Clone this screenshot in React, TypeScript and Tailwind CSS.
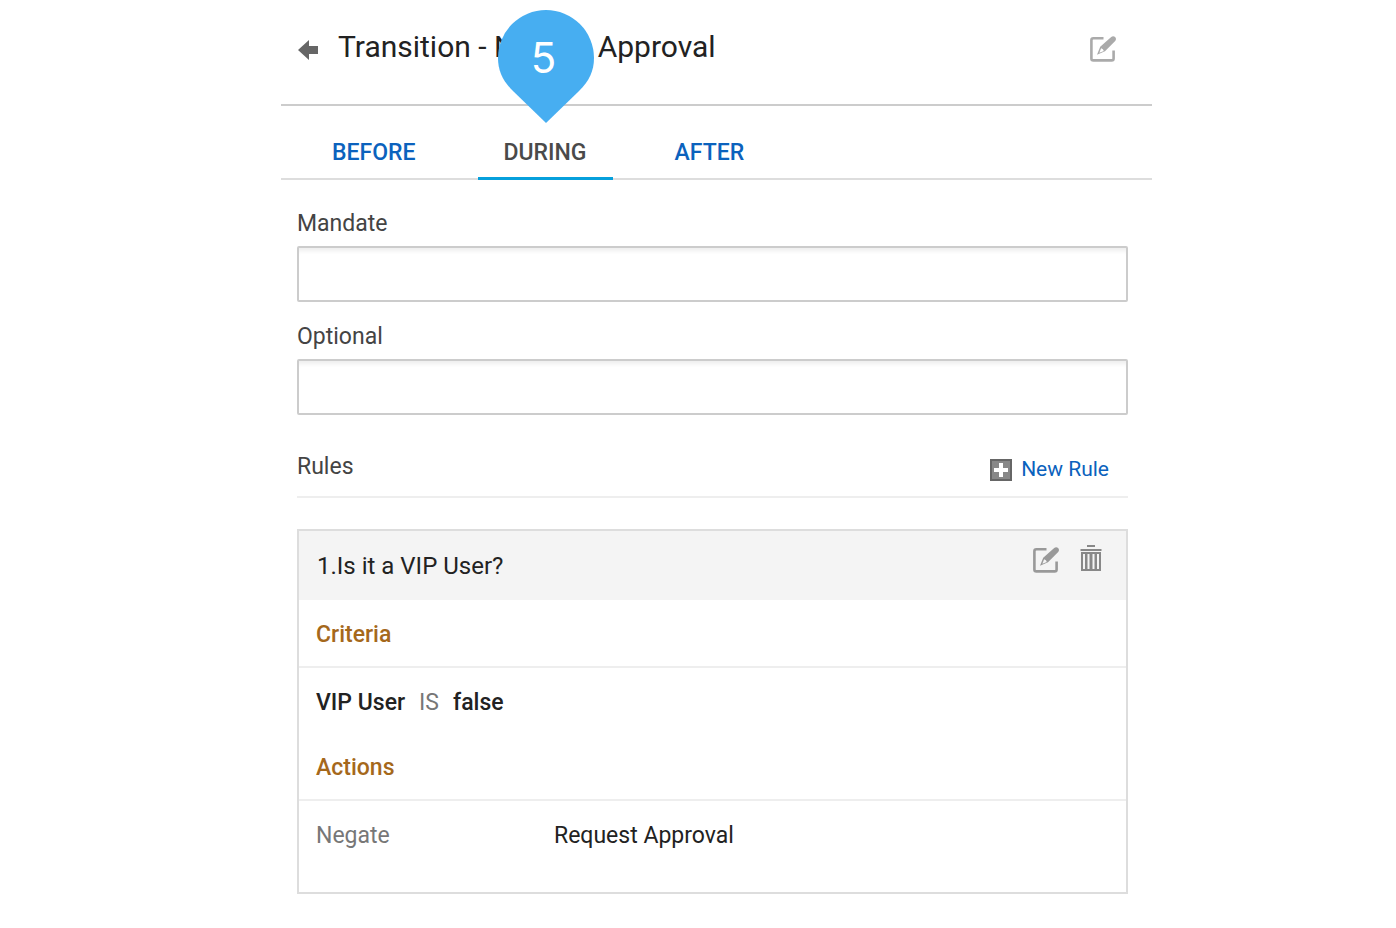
import React from "react";

function EditIcon({ className }: { className?: string }) {
  return (
    <svg viewBox="0 0 26 26" className={className} fill="none" aria-hidden="true">
      <path d="M13.5 2.2H3.4Q1.4 2.2 1.4 4.2V22.4Q1.4 24.4 3.4 24.4H21.6Q23.6 24.4 23.6 22.4V14.5" stroke="currentColor" strokeWidth="2.6" />
      <path fillRule="evenodd" d="M21.2 .9Q23.4-.6 25.1 1.1Q26.8 3 25.2 5L15 15.2L7 18.8L10.2 10.8ZM11.1 12.2L9.4 16.8L13.8 14.9Q13.4 12.8 11.1 12.2Z" fill="currentColor" />
    </svg>
  );
}

function TrashIcon() {
  return (
    <svg viewBox="0 0 22 27" className="h-[27px] w-[22px]" fill="currentColor" aria-hidden="true">
      <path d="M7 0h8v2H7zM.5 4h21v2H.5z" />
      <path fillRule="evenodd" d="M1 7h20v19H1zM3 9v15h2V9zM7.5 9v15h2V9zM12.5 9v15h2V9zM17 9v15h2V9z" />
    </svg>
  );
}

function Field({ id, label }: { id: string; label: string }) {
  return (
    <div className="flex flex-col">
      <label htmlFor={id} className="mb-1.5 leading-8 text-[#444]">{label}</label>
      <input id={id} type="text" className="h-14 w-full rounded-xs border-2 border-[#ccc] bg-white px-3 shadow-[inset_0_6px_4px_-3px_#eee] outline-none" />
    </div>
  );
}

export default function App() {
  return (
    <main className="min-h-screen bg-white pr-[244px] pb-8 pl-[281px] font-['Roboto',sans-serif] text-[23px] text-[#222]">
      <header className="flex h-[106px] items-start border-b-2 border-[#ccc] pt-[27px] pr-9 pl-[17px]">
        <button type="button" aria-label="Back" className="mt-[13px] mr-5 text-[#666]">
          <svg viewBox="0 0 20 20" className="size-5" fill="currentColor" aria-hidden="true">
            <path d="M0 10L11 0V6H20V14H11V20Z" />
          </svg>
        </button>
        <h1 className="flex-1 text-3xl leading-10">Transition - Negate Approval</h1>
        <button type="button" aria-label="Edit transition" className="mt-[9px] text-[#aaa]">
          <EditIcon className="size-[26px]" />
        </button>
      </header>

      <nav className="flex h-[74px] border-b-2 border-[#ddd] pl-4 font-medium text-[#0b62bd]">
        <a href="#before" className="px-[35px] pt-[31px] leading-8">BEFORE</a>
        <a href="#during" aria-current="page" className="relative -mb-0.5 ml-[27px] border-b-3 border-[#06a0dc] px-[26px] pt-[31px] leading-8 text-[#4a4a4a]">
          DURING
          <span className="absolute -top-24 left-5 h-[113px] w-24">
            <svg viewBox="0 0 96 113" className="size-full" aria-hidden="true">
              <path d="M48 113L15 81C5 71.3 0 61 0 48A48 48 0 0 1 96 48C96 61 91 71.3 81 81Z" fill="#47aef1" />
            </svg>
            <span className="absolute inset-x-0 top-6 pr-1 text-center font-['Inter',sans-serif] text-[42px] leading-12 font-normal text-white">5</span>
          </span>
        </a>
        <a href="#after" className="ml-[27px] px-[35px] pt-[31px] leading-8">AFTER</a>
      </nav>

      <div className="pt-7 pr-6 pl-4">
        <div className="flex flex-col gap-[19px]">
          <Field id="mandate" label="Mandate" />
          <Field id="optional" label="Optional" />
        </div>

        <div className="mt-8 flex h-[51px] justify-between border-b-2 border-[#eee] pt-1 pr-[19px]">
          <h2 className="leading-8 text-[#444]">Rules</h2>
          <button type="button" className="flex h-[38px] items-center gap-[9px] text-[21px] text-[#0b62bd]">
            <svg viewBox="0 0 22 22" className="size-[22px]" aria-hidden="true">
              <path d="M1 1H21V21H1Z" fill="#888" stroke="#666" strokeWidth="2" />
              <path d="M11 4V18M4 11H18" stroke="#fff" strokeWidth="4" />
            </svg>
            New Rule
          </button>
        </div>

        <section className="mt-[31px] border-2 border-[#ddd] pb-10">
          <header className="flex h-[69px] items-start bg-[#f4f4f4] pr-6 pl-[18px]">
            <h3 className="flex-1 pt-[19px] text-2xl leading-8">1.Is it a VIP User?</h3>
            <button type="button" aria-label="Edit rule" className="mt-4 text-[#999]">
              <EditIcon className="size-[26px]" />
            </button>
            <button type="button" aria-label="Delete rule" className="mt-3.5 ml-[21px] text-[#888]">
              <TrashIcon />
            </button>
          </header>
          <h4 className="h-[68px] border-b-2 border-[#eee] px-[17px] pt-[19px] leading-8 font-medium text-[#a5681b]">Criteria</h4>
          <p className="flex h-[65px] gap-[14px] px-[17px] pt-[19px] leading-8">
            <span className="font-medium">VIP User</span>
            <span className="text-[#777]">IS</span>
            <span className="font-medium">false</span>
          </p>
          <h4 className="h-[68px] border-b-2 border-[#eee] px-[17px] pt-[19px] leading-8 font-medium text-[#a5681b]">Actions</h4>
          <dl className="flex px-[17px] pt-[19px] leading-8">
            <dt className="w-[238px] text-[#777]">Negate</dt>
            <dd>Request Approval</dd>
          </dl>
        </section>
      </div>
    </main>
  );
}
